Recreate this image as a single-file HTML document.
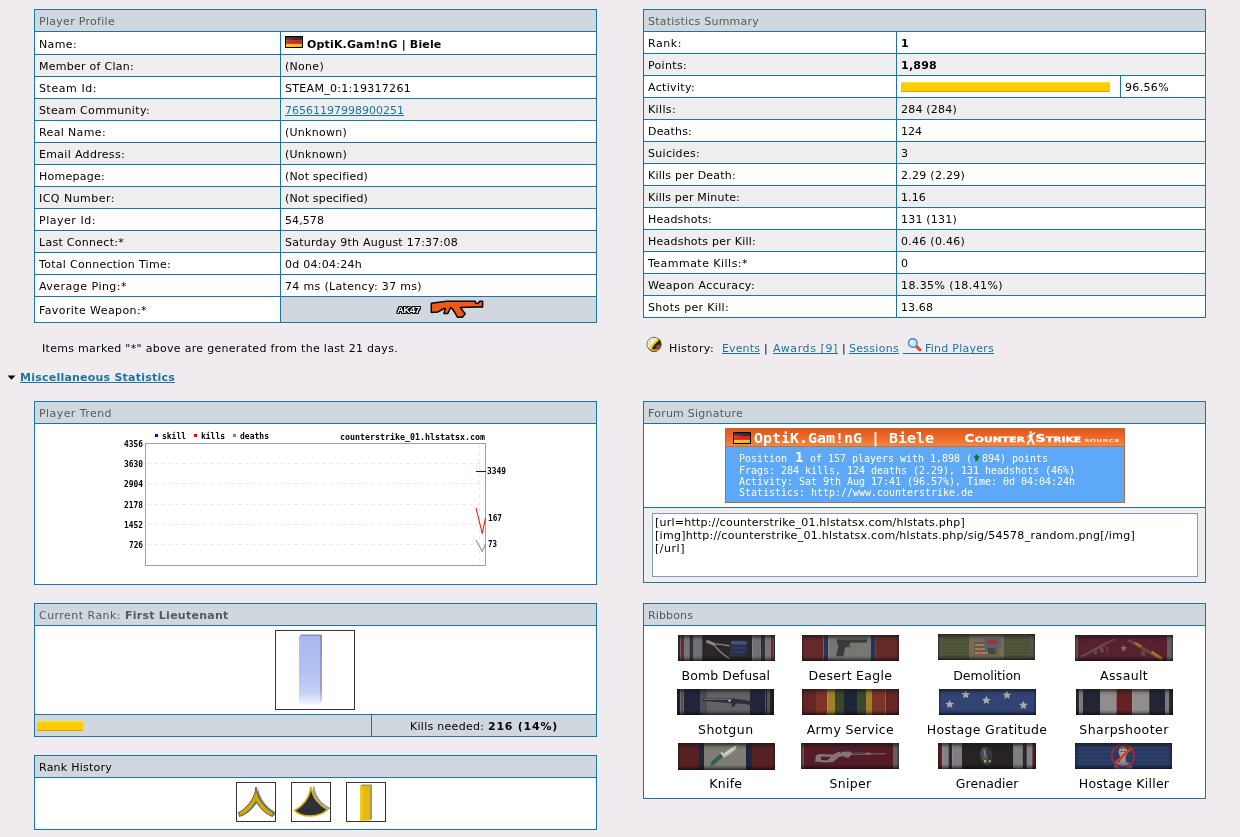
<!DOCTYPE html>
<html lang="en">
<head>
<meta charset="utf-8">
<title>HLstatsX - Player Details</title>
<style>
html,body{margin:0;padding:0;}
body{width:1240px;height:837px;overflow:hidden;background:#efebef;font-family:"DejaVu Sans","Liberation Sans",sans-serif;font-size:11px;color:#000;position:relative;will-change:transform;}
a{color:#1b75a0;text-decoration:underline;}
.panel{position:absolute;box-sizing:border-box;border:1px solid #1b75a0;background:#fff;}
.hd{height:21px;line-height:23px;overflow:hidden;background:#d0d7df;color:#565a60;padding-left:4px;border-bottom:1px solid #1b75a0;}
.row{display:flex;height:21px;line-height:23px;overflow:hidden;border-top:1px solid #1b75a0;}
.row.first{border-top:0;}
.row.alt{background:#efeeef;}
.c1{box-sizing:border-box;border-right:1px solid #1b75a0;padding-left:4px;}
.c2{flex:1;padding-left:4px;}
.abs{position:absolute;white-space:nowrap;}
.bar{background:linear-gradient(#ffec00 0,#ffe600 10%,#ffd000 10%,#ffcc00 30%,#ffcc00 90%,#d9a400 90%);}
.rh{width:38px;height:38px;border:1px solid #333;background:#fff;}
.rh svg{display:block}
.sig{box-sizing:border-box;border:1px solid #b8693f;background:#5ea9f7;overflow:hidden;}
.sigh{position:absolute;left:0;top:0;width:398px;height:17px;border-bottom:1px solid #c4703c;background:linear-gradient(#e2551c,#ee6a2a 50%,#f4873f);}
.sb{font:10px/12px 'DejaVu Sans Mono','Liberation Mono',monospace;color:#fff;letter-spacing:-0.02px;}
.sn{font:bold 13.5px/19px 'DejaVu Sans Mono','Liberation Mono',monospace;color:#fff;transform:scaleX(1.107);transform-origin:0 0;}
.sb svg{vertical-align:-1px}
.ta{box-sizing:border-box;border:1px solid #7f9db9;background:#fff;padding:2px 2px 0 2px;font-size:11px;line-height:13px;white-space:nowrap;overflow:hidden;}
.rl{font-size:12.5px;line-height:16px;text-align:center;}
.sp{display:inline-block;height:1px;}
.flag{vertical-align:0px;}
</style>
</head>
<body>

<!-- Player Profile -->
<div class="panel" style="left:34px;top:9px;width:563px;height:314px;">
  <div class="hd"><span style="letter-spacing:0.290px">Player Profile</span></div>
  <div class="row first" style="height:22px;line-height:25px;"><div class="c1" style="width:246px"><span style="letter-spacing:0.366px">Name:</span></div><div class="c2"><svg class="flag" width="18" height="12" viewBox="0 0 18 12"><defs><linearGradient id="fg" x1="0" y1="0" x2="1" y2="1"><stop offset="0" stop-color="#fff" stop-opacity=".14"/><stop offset=".5" stop-color="#fff" stop-opacity=".04"/><stop offset="1" stop-color="#000" stop-opacity=".12"/></linearGradient></defs><rect width="18" height="12" fill="#000"/><rect x="1" y="1" width="16" height="3" fill="#0c0c0c"/><rect x="1" y="3.700" width="16" height="4" fill="#e0141c"/><rect x="1" y="7.700" width="16" height="3.300" fill="#f4c21c"/><path d="M1 1.500h16v2.500Q10 1.500 1 5.500z" fill="#fff" fill-opacity=".13"/><rect x="1" y="1" width="16" height="10" fill="url(#fg)"/></svg><b style="margin-left:4px"><span style="letter-spacing:0.161px">OptiK.Gam!nG | Biele</span></b></div></div>
  <div class="row alt"><div class="c1" style="width:246px"><span style="letter-spacing:0.267px">Member of Clan:</span></div><div class="c2"><span style="letter-spacing:0.286px">(None)</span></div></div>
  <div class="row"><div class="c1" style="width:246px"><span style="letter-spacing:0.561px">Steam Id:</span></div><div class="c2"><span style="letter-spacing:0.301px">STEAM_0:1:19317261</span></div></div>
  <div class="row alt"><div class="c1" style="width:246px"><span style="letter-spacing:0.338px">Steam Community:</span></div><div class="c2"><a><span style="letter-spacing:0.001px">76561197998900251</span></a></div></div>
  <div class="row"><div class="c1" style="width:246px"><span style="letter-spacing:0.362px">Real Name:</span></div><div class="c2"><span style="letter-spacing:0.260px">(Unknown)</span></div></div>
  <div class="row alt"><div class="c1" style="width:246px"><span style="letter-spacing:0.319px">Email Address:</span></div><div class="c2"><span style="letter-spacing:0.260px">(Unknown)</span></div></div>
  <div class="row"><div class="c1" style="width:246px"><span style="letter-spacing:0.259px">Homepage:</span></div><div class="c2"><span style="letter-spacing:0.158px">(Not specified)</span></div></div>
  <div class="row alt"><div class="c1" style="width:246px"><span style="letter-spacing:0.474px">ICQ Number:</span></div><div class="c2"><span style="letter-spacing:0.158px">(Not specified)</span></div></div>
  <div class="row"><div class="c1" style="width:246px"><span style="letter-spacing:0.533px">Player Id:</span></div><div class="c2"><span style="letter-spacing:0.083px">54,578</span></div></div>
  <div class="row alt"><div class="c1" style="width:246px"><span style="letter-spacing:0.278px">Last Connect:*</span></div><div class="c2"><span style="letter-spacing:0.241px">Saturday 9th August 17:37:08</span></div></div>
  <div class="row"><div class="c1" style="width:246px"><span style="letter-spacing:0.293px">Total Connection Time:</span></div><div class="c2"><span style="letter-spacing:0.262px">0d 04:04:24h</span></div></div>
  <div class="row"><div class="c1" style="width:246px"><span style="letter-spacing:0.480px">Average Ping:*</span></div><div class="c2"><span style="letter-spacing:0.325px">74 ms (Latency: 37 ms)</span></div></div>
  <div class="row" style="height:25px;line-height:27px;"><div class="c1" style="width:246px"><span style="letter-spacing:0.406px">Favorite Weapon:*</span></div><div class="c2" style="background:#d0d7df;position:relative;padding:0"><span class="abs" style="left:116px;top:-1px;font-family:'Liberation Sans',sans-serif;font-weight:bold;font-size:9.5px;letter-spacing:-0.3px;color:#fff;text-shadow:-1px 0 #000,1px 0 #000,0 -1px #000,0 1px #000,-1px -1px #000,1px 1px #000,-1px 1px #000,1px -1px #000;">AK47</span><svg class="abs" style="left:149px;top:2px" width="55" height="21" viewBox="0 0 55 21"><path d="M1.300 4.200L16.800 2.300L45.400 2.300L45.400 3.800L48 4.600L49.700 2.300L52.600 2.300L52.600 8L45.400 8L30.300 8.500L33 12L35.200 14.800L32.300 18.200L27.400 18.200L24.500 13L22.100 9.500L20.700 8.500L17.800 14.400L13.900 14.400L15.300 9.500L13.900 9.500L8.100 12.900L1.300 13.400Z" fill="#f25a14" stroke="#000" stroke-width="1.500" stroke-linejoin="round"/></svg></div></div>
</div>

<!-- Statistics Summary -->
<div class="panel" style="left:643px;top:9px;width:563px;height:309px;">
  <div class="hd"><span style="letter-spacing:0.225px">Statistics Summary</span></div>
  <div class="row first"><div class="c1" style="width:253px"><span style="letter-spacing:0.559px">Rank:</span></div><div class="c2"><b><span style="letter-spacing:0.344px">1</span></b></div></div>
  <div class="row alt"><div class="c1" style="width:253px"><span style="letter-spacing:0.321px">Points:</span></div><div class="c2"><b><span style="letter-spacing:0.241px">1,898</span></b></div></div>
  <div class="row"><div class="c1" style="width:253px"><span style="letter-spacing:0.328px">Activity:</span></div><div class="c2" style="position:relative;flex:none;width:224px;border-right:1px solid #1b75a0;box-sizing:border-box;"><div class="bar" style="position:absolute;left:4px;top:6px;width:209px;height:10px;"></div></div><div class="c2" style="padding-left:4px"><span style="letter-spacing:0.341px">96.56%</span></div></div>
  <div class="row alt"><div class="c1" style="width:253px"><span style="letter-spacing:0.362px">Kills:</span></div><div class="c2"><span style="letter-spacing:0.214px">284 (284)</span></div></div>
  <div class="row"><div class="c1" style="width:253px"><span style="letter-spacing:0.185px">Deaths:</span></div><div class="c2"><span style="letter-spacing:0.000px">124</span></div></div>
  <div class="row alt"><div class="c1" style="width:253px"><span style="letter-spacing:0.299px">Suicides:</span></div><div class="c2"><span style="letter-spacing:0.000px">3</span></div></div>
  <div class="row"><div class="c1" style="width:253px"><span style="letter-spacing:0.228px">Kills per Death:</span></div><div class="c2"><span style="letter-spacing:0.266px">2.29 (2.29)</span></div></div>
  <div class="row alt"><div class="c1" style="width:253px"><span style="letter-spacing:0.197px">Kills per Minute:</span></div><div class="c2"><span style="letter-spacing:0.125px">1.16</span></div></div>
  <div class="row"><div class="c1" style="width:253px"><span style="letter-spacing:0.205px">Headshots:</span></div><div class="c2"><span style="letter-spacing:0.214px">131 (131)</span></div></div>
  <div class="row alt"><div class="c1" style="width:253px"><span style="letter-spacing:0.232px">Headshots per Kill:</span></div><div class="c2"><span style="letter-spacing:0.266px">0.46 (0.46)</span></div></div>
  <div class="row"><div class="c1" style="width:253px"><span style="letter-spacing:0.473px">Teammate Kills:*</span></div><div class="c2"><span style="letter-spacing:0.000px">0</span></div></div>
  <div class="row alt"><div class="c1" style="width:253px"><span style="letter-spacing:0.372px">Weapon Accuracy:</span></div><div class="c2"><span style="letter-spacing:0.402px">18.35% (18.41%)</span></div></div>
  <div class="row"><div class="c1" style="width:253px"><span style="letter-spacing:0.327px">Shots per Kill:</span></div><div class="c2"><span style="letter-spacing:0.100px">13.68</span></div></div>
</div>

<div class="abs" style="left:42px;top:342px;line-height:14px;"><span style="letter-spacing:0.299px">Items marked "*" above are generated from the last 21 days.</span></div>

<!-- history line -->
<svg class="abs" style="left:646px;top:336px" width="16" height="16" viewBox="0 0 16 16"><defs><clipPath id="ck"><circle cx="8" cy="8.3" r="7.4"/></clipPath></defs><circle cx="8" cy="8.3" r="7.4" fill="#f2f0e2"/><g clip-path="url(#ck)"><path d="M8 8.5L16 0V16H4Z" fill="#2a2216"/><path d="M9 11l4-3l3 3v3z" fill="#8a5a2a"/><path d="M0 11.500Q8 15 16 11.500V16H0Z" fill="#d9a51a"/><path d="M0 14Q8 17 16 14V16H0Z" fill="#5a4210"/><path d="M3 12.500L14.500 1" stroke="#f0cf1e" stroke-width="2.200"/><path d="M2.500 11L13.500 0" stroke="#fff6a0" stroke-width=".8"/></g><circle cx="8" cy="8.300" r="7.100" fill="none" stroke="#5a4a20" stroke-width=".9" stroke-opacity=".8"/><path d="M4 5l1 .8M3 8h1.200M8 2.500v1.200" stroke="#888" stroke-width=".7"/></svg>
<div class="abs" style="left:669px;top:342px;line-height:14px;"><span style="letter-spacing:0.369px">History:</span><i class="sp" style="width:8px"></i><a><span style="letter-spacing:0.125px">Events</span></a><i class="sp" style="width:4px"></i><span style="letter-spacing:1.281px">|</span><i class="sp" style="width:4px"></i><a><span style="letter-spacing:0.606px">Awards [9&#93;</span></a><i class="sp" style="width:4px"></i><span style="letter-spacing:1.281px">|</span><i class="sp" style="width:2px"></i><a><span style="letter-spacing:0.287px">Sessions</span></a><i class="sp" style="width:26px"></i><a style="text-decoration:none"><span style="letter-spacing:0.250px">Find Players</span></a></div>
<div class="abs" style="left:903px;top:353px;width:91px;height:1px;background:#1b75a0;"></div>
<svg class="abs" style="left:907px;top:337px" width="16" height="16" viewBox="0 0 16 16"><path d="M9 9 L13 13" stroke="#d8281e" stroke-width="2.8" stroke-linecap="round"/><path d="M9.500 9.500 L13 13" stroke="#ff6a50" stroke-width="1" stroke-linecap="round"/><circle cx="5.800" cy="6" r="4.300" fill="#bfe6fb" stroke="#4a86b8" stroke-width="1.400"/><circle cx="4.800" cy="5" r="1.700" fill="#fff" fill-opacity=".85"/></svg>

<!-- misc heading -->
<svg class="abs" style="left:7px;top:375px" width="9" height="5" viewBox="0 0 9 5"><path d="M0.5 0.5 L8.5 0.5 L4.5 4.8 Z" fill="#000"/></svg>
<div class="abs" style="left:20px;top:371px;line-height:14px;font-weight:bold;"><a><span style="letter-spacing:0.227px">Miscellaneous Statistics</span></a></div>

<!-- Player Trend -->
<div class="panel" style="left:34px;top:401px;width:563px;height:184px;">
  <div class="hd"><span style="letter-spacing:0.430px">Player Trend</span></div>
  <svg class="abs" style="left:85px;top:26px" width="400" height="150" viewBox="120 428 400 150" font-family="'DejaVu Sans Mono','Liberation Mono',monospace" font-size="8px" font-weight="bold" fill="#000">
    <rect x="145.5" y="443.5" width="340" height="122" fill="#fff" stroke="#9aa4a4" stroke-width="1"/>
    <g stroke="#ebebeb" stroke-width="1" stroke-dasharray="4 3">
      <path d="M147 463.5H485M147 483.5H485M147 504.5H485M147 524.5H485M147 544.5H485"/>
      <path d="M479.5 445V565"/>
    </g>
    <rect x="155" y="434" width="3" height="3" fill="#0000ff"/>
    <rect x="194" y="434" width="3" height="3" fill="#ff0000"/>
    <rect x="233" y="434" width="3" height="3" fill="#808080"/>
    <text x="162" y="439" textLength="24" lengthAdjust="spacingAndGlyphs">skill</text>
    <text x="201" y="439" textLength="24" lengthAdjust="spacingAndGlyphs">kills</text>
    <text x="240" y="439" textLength="29" lengthAdjust="spacingAndGlyphs">deaths</text>
    <text x="340" y="440" textLength="145" lengthAdjust="spacingAndGlyphs">counterstrike_01.hlstatsx.com</text>
    <g text-anchor="end">
      <text x="143" y="446.500" textLength="19" lengthAdjust="spacingAndGlyphs">4356</text>
      <text x="143" y="467" textLength="19" lengthAdjust="spacingAndGlyphs">3630</text>
      <text x="143" y="487" textLength="19" lengthAdjust="spacingAndGlyphs">2904</text>
      <text x="143" y="508" textLength="19" lengthAdjust="spacingAndGlyphs">2178</text>
      <text x="143" y="528" textLength="19" lengthAdjust="spacingAndGlyphs">1452</text>
      <text x="143" y="548" textLength="14" lengthAdjust="spacingAndGlyphs">726</text>
    </g>
    <path d="M476 471.5H486" stroke="#0000ff" stroke-width="1" fill="none"/>
    <path d="M476 508L482.3 533.5L485.5 518" stroke="#ff0000" stroke-width="1" fill="none"/>
    <path d="M476 540L482.3 551.5L485.5 544" stroke="#808080" stroke-width="1" fill="none"/>
    <text x="487" y="473.500" textLength="19" lengthAdjust="spacingAndGlyphs">3349</text>
    <text x="488" y="521" textLength="14" lengthAdjust="spacingAndGlyphs">167</text>
    <text x="488" y="547" textLength="9" lengthAdjust="spacingAndGlyphs">73</text>
  </svg>
</div>

<!-- Current Rank -->
<div class="panel" style="left:34px;top:603px;width:563px;height:134px;">
  <div class="hd"><span style="letter-spacing:0.464px">Current Rank: </span><b><span style="letter-spacing:0.251px">First Lieutenant</span></b></div>
  <div class="abs" style="left:240px;top:26px;width:78px;height:78px;border:1px solid #333;background:#fff;">
    <svg width="78" height="78" viewBox="276 631 78 78"><defs><linearGradient id="lt" x1="0" y1="0" x2="0" y2="1"><stop offset="0" stop-color="#a8b8ee"/><stop offset=".5" stop-color="#b4c2f2"/><stop offset=".8" stop-color="#c6d0f6"/><stop offset=".94" stop-color="#e8ecfc"/><stop offset="1" stop-color="#fff"/></linearGradient><linearGradient id="lts" x1="0" y1="0" x2="0" y2="1"><stop offset="0" stop-color="#8a8fb8"/><stop offset=".8" stop-color="#9ca2d0"/><stop offset="1" stop-color="#dfe2f4"/></linearGradient></defs>
      <path d="M301 634.5H322V700L320 704V638H299Z" fill="url(#lts)"/>
      <rect x="299" y="636" width="21" height="70" fill="url(#lt)"/>
    </svg>
  </div>
  <div class="abs" style="left:0;top:110px;width:561px;height:21px;border-top:1px solid #1b75a0;background:#d0d7df;">
    <div class="bar abs" style="left:2px;top:6px;width:46px;height:10px;"></div>
    <div class="abs" style="left:336px;top:0;width:1px;height:21px;background:#1b75a0;"></div>
    <div class="abs" style="left:337px;top:0;width:224px;height:21px;line-height:23px;text-align:center;"><span style="letter-spacing:0.281px">Kills needed: </span><b><span style="letter-spacing:0.757px">216 (14%)</span></b></div>
  </div>
</div>

<!-- Rank History -->
<div class="panel" style="left:34px;top:755px;width:563px;height:75px;">
  <div class="hd" style="color:#000"><span style="letter-spacing:0.240px">Rank History</span></div>
  <div class="abs rh" style="left:201px;top:26px;"><svg width="38" height="38" viewBox="237 783 38 38"><path d="M257 787.5C256 799 247 809 239.5 812.5L240.5 816.5C248 814 254 807 257 801.5C260 807 266 814 273.5 816.5L274.5 812.5C267 809 258 799 257 787.5Z" fill="#8a8a9a" transform="translate(1,-0.5)"/><path d="M256 787C255 799 246 809 238.5 812.5L239.5 816.5C247 814 253 807 256 801.5C259 807 265 814 272.5 816.5L273.5 812.5C266 809 257 799 256 787Z" fill="#c9a81c" stroke="#4a4220" stroke-width=".8"/></svg></div>
  <div class="abs rh" style="left:256px;top:26px;"><svg width="38" height="38" viewBox="292 783 38 38"><path d="M312.5 787C312 797 305 806 296 810.5C304 818 321 818 329.5 809C321 805 314 797 313.5 787Z" fill="#9a9aa8" transform="translate(1,-1)"/><path d="M310.5 787.5C310 797 303 806 294.5 810.5C302 818 319 818 327.5 809.5C319 805 312 797 311.5 787.5Z" fill="#2c3138" stroke="#e0b414" stroke-width="1.6" stroke-linejoin="round"/></svg></div>
  <div class="abs rh" style="left:311px;top:26px;"><svg width="38" height="38" viewBox="347 783 38 38"><path d="M362 784.5H372V819L370 820.5V786H360Z" fill="#a89a50"/><rect x="360" y="786" width="10" height="34.5" fill="#e6b90e"/><rect x="360" y="786" width="3" height="34.5" fill="#f0c81e"/></svg></div>
</div>

<!-- Forum Signature -->
<div class="panel" style="left:643px;top:401px;width:563px;height:182px;">
  <div class="hd"><span style="letter-spacing:0.237px">Forum Signature</span></div>
  <div class="abs sig" style="left:81px;top:26px;width:400px;height:75px;">
    <div class="sigh"></div>
    <svg class="abs" style="left:7px;top:3px" width="18" height="12" viewBox="0 0 18 12"><rect width="18" height="12" fill="#000"/><rect x="1" y="1" width="16" height="3" fill="#0c0c0c"/><rect x="1" y="3.700" width="16" height="4" fill="#e0141c"/><rect x="1" y="7.700" width="16" height="3.300" fill="#f4c21c"/><path d="M1 1.500h16v2.500Q10 1.500 1 5.500z" fill="#fff" fill-opacity=".13"/><rect x="1" y="1" width="16" height="10" fill="url(#fg)"/></svg>
    <div class="abs sn" style="left:28px;top:0px;">OptiK.Gam!nG | Biele</div>
    <svg class="abs" style="left:0;top:0" width="398" height="18" viewBox="726 429 398 18" font-family="'DejaVu Sans','Liberation Sans',sans-serif" font-weight="bold" fill="#fff" stroke="#fff" stroke-width=".35">
      <text x="964.500" y="442" font-size="10.500" textLength="9.500" lengthAdjust="spacingAndGlyphs">C</text>
      <text x="974.800" y="442" font-size="7.300" textLength="50" lengthAdjust="spacingAndGlyphs">OUNTER</text>
      <text x="1035.500" y="442" font-size="10.500" textLength="10" lengthAdjust="spacingAndGlyphs">S</text>
      <text x="1046" y="442" font-size="7.300" textLength="35" lengthAdjust="spacingAndGlyphs">TRIKE</text>
      <text x="1084" y="442" font-size="4.300" textLength="35.500" lengthAdjust="spacingAndGlyphs" fill="#ffe3cf" stroke="none">SOURCE</text>
      <path d="M1030.800 431.200a1.200 1.200 0 1 1 -.1 2.400a1.200 1.200 0 1 1 .1-2.400M1029.800 434.200L1031.600 434.200L1034.800 432.300L1035.300 433L1032.300 435.600L1032.200 438.600L1034.600 444.300L1033.300 444.800L1030.900 439.800L1028.200 444.800L1026.800 444.200L1029.600 438.400L1029.500 436L1027.600 437.800L1026.900 437.200Z"/>
    </svg>
    <div class="abs sb" style="left:13px;top:24px;">Position</div>
    <div class="abs sb" style="left:69px;top:20px;font-weight:bold;font-size:14px;line-height:16px;">1</div>
    <div class="abs sb" style="left:84px;top:24px;">of 157 players with 1,898 (</div>
    <svg class="abs" style="left:247px;top:25px" width="8" height="8" viewBox="0 0 8 8"><path d="M3.700 0.300L7.200 3.800H5.200V6.800H2.200V3.800H0.200Z" fill="#0c7a14"/></svg>
    <div class="abs sb" style="left:256px;top:24px;">894) points</div>
    <div class="abs sb" style="left:13px;top:35.500px;">Frags: 284 kills, 124 deaths (2.29), 131 headshots (46%)</div>
    <div class="abs sb" style="left:13px;top:46.500px;">Activity: Sat 9th Aug 17:41 (96.57%), Time: 0d 04:04:24h</div>
    <div class="abs sb" style="left:13px;top:57.700px;">Statistics: http://www.counterstrike.de</div>
  </div>
  <div class="abs" style="left:0;top:105px;width:561px;height:74px;border-top:1px solid #1b75a0;background:#eeeeee;">
    <div class="abs ta" style="left:8px;top:5px;width:546px;height:64px;"><span style="letter-spacing:0.239px">[url=http://counterstrike_01.hlstatsx.com/hlstats.php&#93;</span><br><span style="letter-spacing:0.276px">[img&#93;http://counterstrike_01.hlstatsx.com/hlstats.php/sig/54578_random.png[/img&#93;</span><br><span style="letter-spacing:0.526px">[/url&#93;</span></div>
  </div>
</div>
<svg width="0" height="0" style="position:absolute"><defs><linearGradient id="rsh" x1="0" y1="0" x2="0" y2="1"><stop offset="0" stop-color="#18181c" stop-opacity=".75"/><stop offset=".07" stop-color="#18181c" stop-opacity=".55"/><stop offset=".14" stop-color="#101014" stop-opacity=".18"/><stop offset=".26" stop-color="#202024" stop-opacity=".06"/><stop offset=".8" stop-color="#202024" stop-opacity=".06"/><stop offset=".9" stop-color="#08080c" stop-opacity=".3"/><stop offset="1" stop-color="#08080c" stop-opacity=".75"/></linearGradient><linearGradient id="rsv" x1="0" y1="0" x2="1" y2="0"><stop offset="0" stop-color="#101014" stop-opacity=".4"/><stop offset=".025" stop-color="#000" stop-opacity="0"/><stop offset=".975" stop-color="#000" stop-opacity="0"/><stop offset="1" stop-color="#101014" stop-opacity=".5"/></linearGradient><filter id="bl" x="-5%" y="-5%" width="110%" height="110%"><feGaussianBlur stdDeviation=".45"/></filter><filter id="bl2" x="0" y="0" width="100%" height="100%"><feGaussianBlur stdDeviation=".7 0"/></filter></defs></svg>
<!-- Ribbons -->
<div class="panel" style="left:643px;top:603px;width:563px;height:196px;">
  <div class="hd"><span style="letter-spacing:0.127px">Ribbons</span></div>
  <svg class="abs" style="left:34px;top:31px" width="97" height="26" viewBox="0 0 97 26"><g filter="url(#bl2)"><rect x="0" y="0" width="2.4" height="26" fill="#3a3436"/><rect x="2.4" y="0" width="3.6" height="26" fill="#643230"/><rect x="6" y="0" width="5.3" height="26" fill="#7c7a7e"/><rect x="11.3" y="0" width="4.4" height="26" fill="#32323c"/><rect x="15.7" y="0" width="8.4" height="26" fill="#767478"/><rect x="24.1" y="0" width="50.2" height="26" fill="#2a282a"/><rect x="74.3" y="0" width="8.4" height="26" fill="#767478"/><rect x="82.7" y="0" width="4.4" height="26" fill="#32323c"/><rect x="87.1" y="0" width="5.4" height="26" fill="#7c7a7e"/><rect x="92.5" y="0" width="3.1" height="26" fill="#643230"/><rect x="95.6" y="0" width="1.4" height="26" fill="#3a3436"/></g><g filter="url(#bl)"><path d="M29.500 6.500L35.700 9.200" stroke="#8c8c90" stroke-width="3" stroke-linecap="round"/><path d="M35.700 9.200Q43 8.800 50.800 10.800M35.700 9.200Q38.500 13.500 41 15.400Q46 20 51 23.400" stroke="#85858a" stroke-width="1.400" fill="none" stroke-linecap="round"/><path d="M53 5.600h15.500l1 10.500l-3 5.500h-15.500l1-8z" fill="#2a3250"/><path d="M53.500 6h15l.3 3.500h-15.500z" fill="#46527a"/><path d="M53 13h14M52.500 17h14" stroke="#3c486c" stroke-width="1.200"/></g><rect width="97" height="26" fill="url(#rsh)"/><rect width="97" height="26" fill="url(#rsv)"/></svg>
  <div class="abs rl" style="left:1.8px;top:64px;width:160px;"><span style="letter-spacing:0.076px">Bomb Defusal</span></div>
  <svg class="abs" style="left:158px;top:31px" width="97" height="26" viewBox="0 0 97 26"><g filter="url(#bl2)"><rect x="0" y="0" width="21.5" height="26" fill="#6a2c2a"/><rect x="21.5" y="0" width="5" height="26" fill="#2a3450"/><rect x="26.5" y="0" width="42" height="26" fill="#7e7c78"/><rect x="68.5" y="0" width="5.3" height="26" fill="#2a3450"/><rect x="73.8" y="0" width="23.2" height="26" fill="#6a2c2a"/></g><g filter="url(#bl)"><path d="M35 3.500h29.500l.5 1v3l-17 .3l-1 3.500l-4 1.500l-1.500 8.500h-7.500l2.500-10l-1.500-3z" fill="#3c3a3a"/><path d="M44.500 9.500c3 0 4 2 3 4" fill="none" stroke="#3c3a3a" stroke-width="1"/><path d="M36 4.500h28" stroke="#6a6864" stroke-width=".8"/></g><rect width="97" height="26" fill="url(#rsh)"/><rect width="97" height="26" fill="url(#rsv)"/></svg>
  <div class="abs rl" style="left:126.4px;top:64px;width:160px;"><span style="letter-spacing:0.300px">Desert Eagle</span></div>
  <svg class="abs" style="left:294px;top:30px" width="97" height="26" viewBox="0 0 97 26"><g filter="url(#bl2)"><rect x="0" y="0" width="5" height="26" fill="#5c5548"/><rect x="5" y="0" width="26" height="26" fill="#545b3e"/><rect x="31" y="0" width="35" height="26" fill="#7b7058"/><rect x="66" y="0" width="26" height="26" fill="#545b3e"/><rect x="92" y="0" width="5" height="26" fill="#5c5548"/></g><g filter="url(#bl)"><path d="M5 4h26M5 7h26M5 10h26M5 13h26M5 16h26M5 19h26M5 22h26M66 4h26M66 7h26M66 10h26M66 13h26M66 16h26M66 19h26M66 22h26" stroke="#495034" stroke-width="1"/><rect x="36" y="8" width="24" height="13" fill="#6c5c44"/><path d="M37 11h12M37 15h10M37 19h20" stroke="#a89c7c" stroke-width="1.500"/><rect x="46" y="4.500" width="17" height="10" rx="1" fill="#62646c"/><rect x="48.500" y="6.500" width="11" height="3.500" fill="#a03430"/><rect x="50" y="14" width="7" height="6" fill="#4a4844"/><path d="M42.500 13v9" stroke="#c04838" stroke-width="1"/></g><rect width="97" height="26" fill="url(#rsh)"/><rect width="97" height="26" fill="url(#rsv)"/></svg>
  <div class="abs rl" style="left:263.1px;top:64px;width:160px;"><span style="letter-spacing:-0.043px">Demolition</span></div>
  <svg class="abs" style="left:431px;top:31px" width="98" height="26" viewBox="0 0 98 26"><g filter="url(#bl2)"><rect x="0" y="0" width="3" height="26" fill="#665856"/><rect x="3" y="0" width="89" height="26" fill="#5a222e"/><rect x="92" y="0" width="6" height="26" fill="#6a6462"/></g><g filter="url(#bl)"><path d="M5 21l8-4l9-5.500l10-5l8-3l.6 1.500l-8 3.500l-5 3l1.500 5.500l-3 1l-1.500-4.500l-3 1.500l.5 4l-2.500 .7l-1-3.500l-12 6.500z" fill="#6e4a52"/><path d="M30 11a5 5 0 0 1 2 7" stroke="#6e4a52" stroke-width="1.400" fill="none"/><path d="M53 4l7 3l12 7l10 6l6 4.500l-1.500 1.500l-7-4l-9-5.500l-1 4l-2.500-.5l.5-5l-8-5l-7-4z" fill="#6a4a48"/><path d="M60.500 6.800l6.500 3.700l-1.200 2l-6.500-3.700zM77 15.500l11 7.500l-1.500 2.500l-10.500-7.500z" fill="#b8702c"/><path d="M66 16a5 5 0 0 0 5 5" stroke="#6a4a48" stroke-width="1.400" fill="none"/><polygon points="48.6,9.8 49.6,12.1 52.0,12.3 50.1,13.9 50.7,16.3 48.6,15.0 46.5,16.3 47.1,13.9 45.2,12.3 47.6,12.1" fill="#8e7078"/></g><rect width="98" height="26" fill="url(#rsh)"/><rect width="98" height="26" fill="url(#rsv)"/></svg>
  <div class="abs rl" style="left:400px;top:64px;width:160px;"><span style="letter-spacing:0.336px">Assault</span></div>
  <svg class="abs" style="left:33px;top:85px" width="97" height="26" viewBox="0 0 97 26"><g filter="url(#bl2)"><rect x="0" y="0" width="3.5" height="26" fill="#24242c"/><rect x="3.5" y="0" width="3" height="26" fill="#54545c"/><rect x="6.5" y="0" width="16.5" height="26" fill="#22253a"/><rect x="23" y="0" width="7" height="26" fill="#525056"/><rect x="30" y="0" width="43" height="26" fill="#68666a"/><rect x="73" y="0" width="15.5" height="26" fill="#22253a"/><rect x="88.5" y="0" width="1.5" height="26" fill="#24242c"/><rect x="90" y="0" width="3" height="26" fill="#54545c"/><rect x="93" y="0" width="4" height="26" fill="#24242c"/></g><g filter="url(#bl)"><path d="M26 9.500l30-.3l4 .8l9 1l5 2v3.500l-5.500-1.500l-8-.5l-2 .5l-1.500 3h-2.500l.5-3.500l-6-.8l-23-1.700z" fill="#2c3036"/><path d="M27 10.300h28" stroke="#8aa0a4" stroke-width=".7"/><circle cx="52.500" cy="11.800" r="1.100" fill="#d0dcdc"/></g><rect width="97" height="26" fill="url(#rsh)"/><rect width="97" height="26" fill="url(#rsv)"/></svg>
  <div class="abs rl" style="left:1.8px;top:118px;width:160px;"><span style="letter-spacing:0.473px">Shotgun</span></div>
  <svg class="abs" style="left:158px;top:85px" width="97" height="26" viewBox="0 0 97 26"><g filter="url(#bl2)"><rect x="0" y="0" width="14" height="26" fill="#6a2826"/><rect x="14" y="0" width="11.5" height="26" fill="#82352a"/><rect x="25.5" y="0" width="7.5" height="26" fill="#a8882c"/><rect x="33" y="0" width="9" height="26" fill="#3c482e"/><rect x="42" y="0" width="13" height="26" fill="#1e2636"/><rect x="55" y="0" width="9" height="26" fill="#3c482e"/><rect x="64" y="0" width="6" height="26" fill="#a8882c"/><rect x="70" y="0" width="13.6" height="26" fill="#82352a"/><rect x="83.6" y="0" width="13.4" height="26" fill="#6a2826"/></g><rect width="97" height="26" fill="url(#rsh)"/><rect width="97" height="26" fill="url(#rsv)"/></svg>
  <div class="abs rl" style="left:126.4px;top:118px;width:160px;"><span style="letter-spacing:0.348px">Army Service</span></div>
  <svg class="abs" style="left:295px;top:85px" width="97" height="26" viewBox="0 0 97 26"><g filter="url(#bl2)"><rect x="0" y="0" width="97" height="26" fill="#30467a"/></g><g filter="url(#bl)"><polygon points="26.7,1.0 27.9,3.9 31.1,4.2 28.7,6.2 29.4,9.3 26.7,7.7 24.0,9.3 24.7,6.2 22.3,4.2 25.5,3.9" fill="#b8b4a8"/><polygon points="10.7,10.8 11.9,13.7 15.1,14.0 12.7,16.0 13.4,19.1 10.7,17.5 8.0,19.1 8.7,16.0 6.3,14.0 9.5,13.7" fill="#b8b4a8"/><polygon points="47.3,6.8 48.5,9.7 51.7,10.0 49.3,12.0 50.0,15.1 47.3,13.5 44.6,15.1 45.3,12.0 42.9,10.0 46.1,9.7" fill="#b8b4a8"/><polygon points="68.0,1.5 69.2,4.4 72.4,4.7 70.0,6.7 70.7,9.8 68.0,8.2 65.3,9.8 66.0,6.7 63.6,4.7 66.8,4.4" fill="#b8b4a8"/><polygon points="84.4,11.7 85.6,14.6 88.8,14.9 86.4,16.9 87.1,20.0 84.4,18.4 81.7,20.0 82.4,16.9 80.0,14.9 83.2,14.6" fill="#b8b4a8"/></g><rect width="97" height="26" fill="url(#rsh)"/><rect width="97" height="26" fill="url(#rsv)"/></svg>
  <div class="abs rl" style="left:263.1px;top:118px;width:160px;"><span style="letter-spacing:0.328px">Hostage Gratitude</span></div>
  <svg class="abs" style="left:432px;top:85px" width="97" height="26" viewBox="0 0 97 26"><g filter="url(#bl2)"><rect x="0" y="0" width="3.5" height="26" fill="#2a2a32"/><rect x="3.5" y="0" width="3.5" height="26" fill="#808084"/><rect x="7" y="0" width="17" height="26" fill="#222634"/><rect x="24" y="0" width="16.4" height="26" fill="#989494"/><rect x="40.4" y="0" width="15.9" height="26" fill="#6a2224"/><rect x="56.3" y="0" width="16.9" height="26" fill="#989494"/><rect x="73.2" y="0" width="16.4" height="26" fill="#222634"/><rect x="89.6" y="0" width="3.1" height="26" fill="#808084"/><rect x="92.7" y="0" width="4.3" height="26" fill="#2a2a32"/></g><rect width="97" height="26" fill="url(#rsh)"/><rect width="97" height="26" fill="url(#rsv)"/></svg>
  <div class="abs rl" style="left:400px;top:118px;width:160px;"><span style="letter-spacing:0.453px">Sharpshooter</span></div>
  <svg class="abs" style="left:34px;top:139px" width="97" height="27" viewBox="0 0 97 27"><g filter="url(#bl2)"><rect x="0" y="0" width="21" height="27" fill="#5c2020"/><rect x="21" y="0" width="5" height="27" fill="#1e263c"/><rect x="26" y="0" width="42" height="27" fill="#86827a"/><rect x="68" y="0" width="6" height="27" fill="#1e263c"/><rect x="74" y="0" width="23" height="27" fill="#5c2020"/></g><g filter="url(#bl)"><path d="M33 19l10-8.500l2.500 2.800l-9.500 8.700l-3.500 1z" fill="#2e6a52"/><path d="M34.500 18.500l9-7.500" stroke="#1e4a3a" stroke-width="1" stroke-dasharray="1.500 1.500"/><path d="M43 9.500l4 4.500" stroke="#d8d8d4" stroke-width="2"/><path d="M45.500 10.500l8-6l5.500-2.500l-1.500 4.500l-9 7z" fill="#c8c8c0"/><path d="M46.500 11.500l11-8" stroke="#f0f0ec" stroke-width="1"/></g><rect width="97" height="27" fill="url(#rsh)"/><rect width="97" height="27" fill="url(#rsv)"/></svg>
  <div class="abs rl" style="left:1.8px;top:172px;width:160px;"><span style="letter-spacing:0.283px">Knife</span></div>
  <svg class="abs" style="left:157px;top:139px" width="98" height="26" viewBox="0 0 98 26"><g filter="url(#bl2)"><rect x="0" y="0" width="3" height="26" fill="#665652"/><rect x="3" y="0" width="89" height="26" fill="#581c26"/><rect x="92" y="0" width="6" height="26" fill="#6c625a"/></g><g filter="url(#bl)"><path d="M15 12.500l3-1.500l14 .5l5-2.500l12-.5l1 1l20 .2v2l-20 .3l-2 2.500h-4l-1-1.500l-5 1l-6 5l-9 .5l-9-1z" fill="#8a7a80"/><path d="M20 13.500l10 .5l-4 3.500l-6-.5z" fill="#5a1e28"/><path d="M51 10.500h14" stroke="#4a3a48" stroke-width="1.600"/><path d="M70 10.800h15" stroke="#8a6a68" stroke-width="1"/><path d="M37 6.800h19" stroke="#3a2a30" stroke-width="2"/><path d="M40 8v2M52 8v2" stroke="#3a2a30" stroke-width="1.200"/></g><rect width="98" height="26" fill="url(#rsh)"/><rect width="98" height="26" fill="url(#rsv)"/></svg>
  <div class="abs rl" style="left:126.4px;top:172px;width:160px;"><span style="letter-spacing:0.315px">Sniper</span></div>
  <svg class="abs" style="left:294px;top:139px" width="98" height="26" viewBox="0 0 98 26"><g filter="url(#bl2)"><rect x="0" y="0" width="4.2" height="26" fill="#582422"/><rect x="4.2" y="0" width="6.2" height="26" fill="#8a888a"/><rect x="10.4" y="0" width="4" height="26" fill="#2a2a32"/><rect x="14.4" y="0" width="9.3" height="26" fill="#868486"/><rect x="23.7" y="0" width="51.9" height="26" fill="#262428"/><rect x="75.6" y="0" width="8.9" height="26" fill="#868486"/><rect x="84.5" y="0" width="4.4" height="26" fill="#2a2a32"/><rect x="88.9" y="0" width="5.3" height="26" fill="#8a888a"/><rect x="94.2" y="0" width="3.8" height="26" fill="#582422"/></g><g filter="url(#bl)"><ellipse cx="48.100" cy="12.700" rx="6.300" ry="9.300" fill="#3a3a3e" transform="rotate(-10 48.100 12.700)"/><ellipse cx="47.600" cy="12" rx="4.600" ry="7.800" fill="#505054" transform="rotate(-10 47.600 12)"/><path d="M46 6.500l1.500 8" stroke="#9a9aa0" stroke-width="1"/><path d="M49.500 6l2 11" stroke="#2a2a2e" stroke-width="1.600"/><rect x="46" y="17" width="2" height="2.500" fill="#b8c020"/><rect x="51" y="17" width="1.800" height="2.300" fill="#a8b020"/></g><rect width="98" height="26" fill="url(#rsh)"/><rect width="98" height="26" fill="url(#rsv)"/></svg>
  <div class="abs rl" style="left:263.1px;top:172px;width:160px;"><span style="letter-spacing:0.082px">Grenadier</span></div>
  <svg class="abs" style="left:431px;top:139px" width="97" height="26" viewBox="0 0 97 26"><g filter="url(#bl2)"><rect x="0" y="0" width="97" height="26" fill="#283a64"/></g><g filter="url(#bl)"><path d="M4 5h89M4 9h89M4 13h89M4 17h89M4 21h89" stroke="#34487a" stroke-width="1"/><path d="M38.500 26c.5-5 4-7.500 9.600-7.500s9 2.500 9.600 7.500z" fill="#6a86a6"/><path d="M45.500 14h5l.5 5l-3 1.500l-3-1.500z" fill="#a89484"/><ellipse cx="48" cy="9" rx="4.300" ry="6" fill="#b4a494"/><path d="M43.600 7c.5-5 8.300-5 8.800 0c-2.500-2-6.300-2-8.800 0z" fill="#7a6a58"/><path d="M45.800 8.500h1.600M48.800 8.500h1.600" stroke="#3a3030" stroke-width="1"/><circle cx="48.100" cy="12.700" r="11.300" fill="none" stroke="#b02830" stroke-width="1.700"/><path d="M40 20.500l16-15" stroke="#dc3c2c" stroke-width="2.400"/></g><rect width="97" height="26" fill="url(#rsh)"/><rect width="97" height="26" fill="url(#rsv)"/></svg>
  <div class="abs rl" style="left:400px;top:172px;width:160px;"><span style="letter-spacing:0.238px">Hostage Killer</span></div>
</div>

</body>
</html>
